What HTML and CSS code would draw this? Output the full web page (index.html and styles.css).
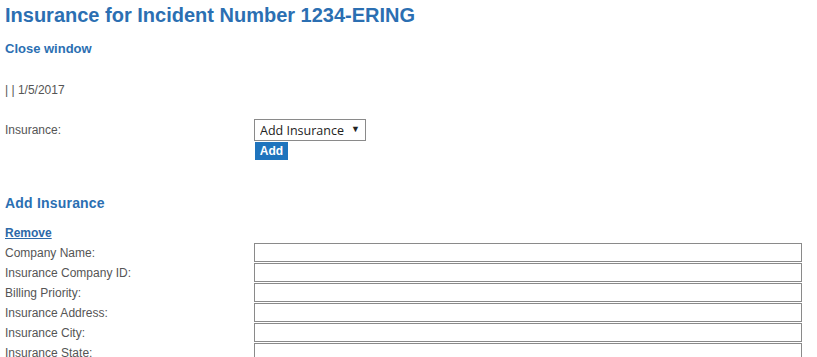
FILE: index.html
```html
<!DOCTYPE html>
<html lang="en">
<head>
  <meta charset="UTF-8" />
  <title>Insurance for Incident Number 1234-ERING</title>
  <link rel="stylesheet" href="styles.css">
</head>
<body>
  <h1>Insurance for Incident Number 1234-ERING</h1>
  <a class="close-link" href="#">Close window</a>

  <p class="stamp">| | 1/5/2017</p>

  <!-- Insurance picker -->
  <div class="pick-row">
    <label class="pick-label">Insurance:</label>
    <div class="pick-controls">
      <span class="select-wrap">
        <select class="pick-select">
          <option>Add Insurance</option>
        </select>
      </span>
      <button class="add-btn">Add</button>
    </div>
  </div>

  <!-- Add Insurance section -->
  <h2>Add Insurance</h2>
  <a class="remove-link" href="#">Remove</a>

  <div class="fields">
    <label>Company Name:</label>
    <input type="text">
    <label>Insurance Company ID:</label>
    <input type="text">
    <label>Billing Priority:</label>
    <input type="text">
    <label>Insurance Address:</label>
    <input type="text">
    <label>Insurance City:</label>
    <input type="text">
    <label>Insurance State:</label>
    <input type="text">
    <label>Insurance Zip:</label>
    <input type="text">
    <label>Insurance Phone:</label>
    <input type="text">
  </div>
</body>
</html>
```

FILE: styles.css
```css
html {
  overflow: hidden;
}

body {
  margin: 0;
  padding: 5px 0 0 5px;
  font-family: "Liberation Sans", Arial, sans-serif;
  color: #555;
  background-color: #fff;
}

h1 {
  margin: 0 0 15px;
  font-size: 20px;
  line-height: 21px;
  color: #2b6fb2;
}

.close-link {
  display: block;
  font-size: 13px;
  font-weight: bold;
  line-height: 16px;
  color: #2b6fb2;
  text-decoration: none;
}

.stamp {
  margin: 26px 0 0;
  font-size: 12px;
  line-height: 14px;
}

.pick-row {
  display: grid;
  grid-template-columns: 249px auto;
  margin-top: 22px;
}

.pick-label {
  padding-top: 4px;
  font-size: 12px;
  line-height: 14px;
}

.pick-controls {
  display: flex;
  flex-direction: column;
  align-items: flex-start;
}

.select-wrap {
  position: relative;
  display: block;
}

.select-wrap::after {
  content: "\25BC";
  position: absolute;
  right: 6px;
  top: 5px;
  font-size: 9px;
  color: #222;
  pointer-events: none;
}

.pick-select {
  appearance: none;
  -webkit-appearance: none;
  box-sizing: border-box;
  width: 112px;
  height: 22px;
  margin: 0;
  padding: 0 0 0 5px;
  border: 1px solid #8a8a8a;
  border-radius: 0;
  background-color: #fff;
  font-family: "Open Sans", "Noto Sans", sans-serif;
  font-size: 12.5px;
  color: #222;
}

.add-btn {
  box-sizing: border-box;
  width: 33px;
  height: 18px;
  margin: 1px 0 0 1px;
  padding: 0;
  border: none;
  background-color: #1f74bd;
  color: #fff;
  font-family: "Liberation Sans", Arial, sans-serif;
  font-size: 12px;
  font-weight: bold;
}

h2 {
  margin: 35px 0 0;
  font-size: 14px;
  line-height: 16px;
  letter-spacing: 0.2px;
  color: #2b6fb2;
}

.remove-link {
  display: inline-block;
  margin-top: 15px;
  font-size: 12px;
  font-weight: bold;
  line-height: 14px;
  color: #2d69a8;
  text-decoration: underline;
}

.fields {
  display: grid;
  grid-template-columns: 249px 548px;
  row-gap: 1px;
  margin-top: 2px;
  align-items: center;
}

.fields label {
  font-size: 12px;
  line-height: 14px;
}

.fields input {
  box-sizing: border-box;
  width: 548px;
  height: 19px;
  margin: 0;
  padding: 0 3px;
  border: 1px solid #8a8a8a;
  border-radius: 0;
  font-family: "Liberation Sans", Arial, sans-serif;
  font-size: 12px;
}
```
